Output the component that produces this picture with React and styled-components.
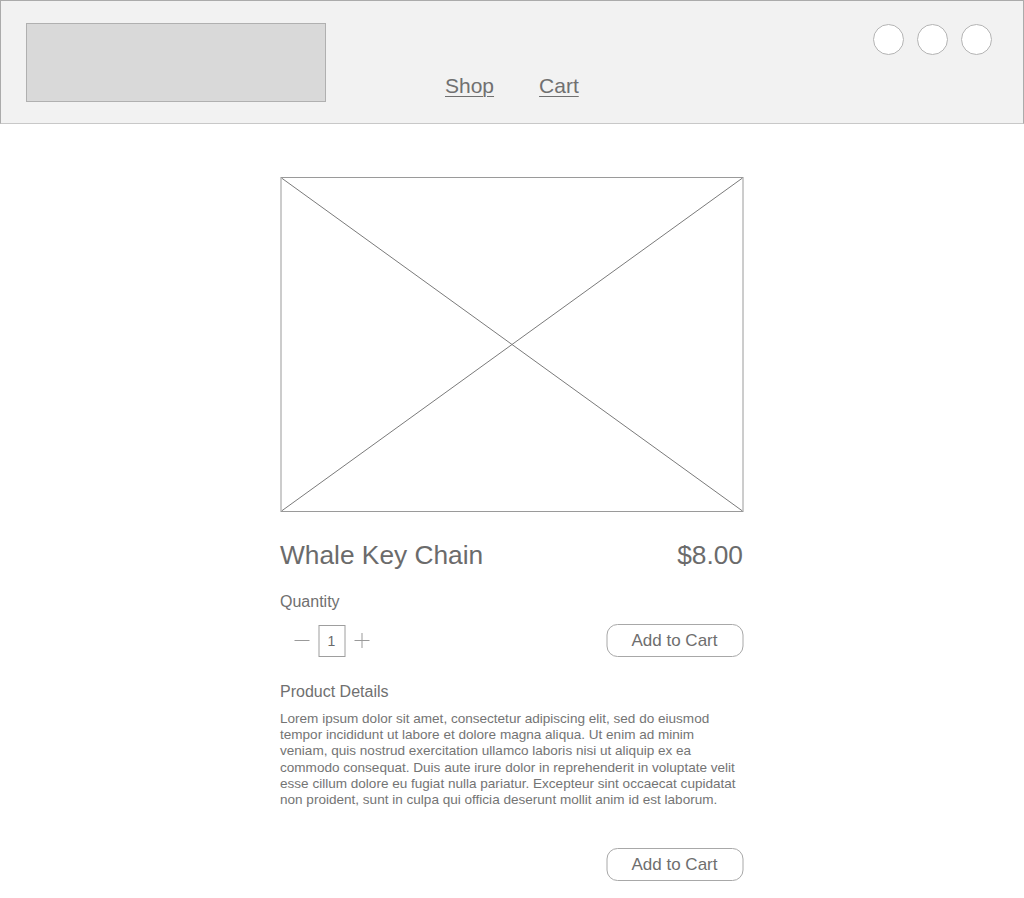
import styled, { createGlobalStyle } from 'styled-components';

const GlobalStyle = createGlobalStyle`
  body {
    margin: 0;
    background: #ffffff;
    font-family: "Liberation Sans", Arial, sans-serif;
    color: #6e6e6e;
  }
`;

const Header = styled.header`
  height: 124px;
  box-sizing: border-box;
  background: #f2f2f2;
  border: 1px solid #ababab;
  border-bottom-color: #c8c8c8;
  display: flex;
  padding: 22px 31px 0 25px;
`;

const Logo = styled.div`
  width: 300px;
  height: 79px;
  box-sizing: border-box;
  background: #d9d9d9;
  border: 1px solid #b0b0b0;
`;

const Nav = styled.nav`
  display: flex;
  gap: 45px;
  margin-left: 119px;
  padding-top: 50px;
`;

const NavLink = styled.a`
  font-size: 21px;
  color: #707070;
  text-decoration: underline;
  text-underline-offset: 3px;
  text-decoration-thickness: 1px;
  line-height: 26px;
  height: 26px;
`;

const Icons = styled.div`
  margin-left: auto;
  display: flex;
  gap: 13px;
  padding-top: 1px;
`;

const Circle = styled.div`
  width: 31px;
  height: 31px;
  box-sizing: border-box;
  border-radius: 50%;
  background: #ffffff;
  border: 1px solid #b4b4b4;
`;

const Main = styled.main`
  width: 463px;
  margin: 0 auto;
  padding: 53px 0 40px;
  transform: translateX(-0.5px);
`;

const ImageBox = styled.div`
  height: 335px;
  border: 1px solid #9a9a9a;
  box-sizing: border-box;
  svg {
    display: block;
    width: 100%;
    height: 100%;
  }
`;

const TitleRow = styled.div`
  display: flex;
  justify-content: space-between;
  align-items: center;
  margin-top: 28px;
  font-size: 26.3px;
  line-height: 30px;
  color: #6b6b6b;
`;

const Label = styled.div`
  font-size: 16px;
  line-height: 20px;
  color: #707070;
  margin-top: ${p => p.$gap || 0}px;
`;

const ActionRow = styled.div`
  display: flex;
  justify-content: space-between;
  align-items: center;
  margin-top: ${p => p.$gap || 0}px;
`;

const Stepper = styled.div`
  display: flex;
  align-items: center;
  gap: 9px;
  padding-left: 14px;
`;

const StepSign = styled.span`
  width: 15px;
  height: 15px;
  position: relative;
  &::before, &::after {
    content: '';
    position: absolute;
    background: #9a9a9a;
  }
  &::before {
    left: 0;
    right: 0;
    top: 7px;
    height: 1px;
  }
  &::after {
    display: ${p => (p.$plus ? 'block' : 'none')};
    top: 0;
    bottom: 0;
    left: 7px;
    width: 1px;
  }
`;

const QtyBox = styled.div`
  width: 27px;
  height: 32px;
  box-sizing: border-box;
  border: 1px solid #9e9e9e;
  display: flex;
  align-items: center;
  justify-content: center;
  font-size: 14px;
  color: #6a6a6a;
`;

const CartButton = styled.button`
  width: 137px;
  height: 33px;
  box-sizing: border-box;
  border: 1px solid #a8a8a8;
  border-radius: 11px;
  background: #ffffff;
  font-family: inherit;
  font-size: 17px;
  color: #6e6e6e;
  padding: 0;
  cursor: pointer;
`;

const Paragraph = styled.p`
  margin: 9px 0 0;
  font-size: 13.55px;
  line-height: 16.2px;
  color: #747474;
`;

const BottomRow = styled.div`
  display: flex;
  justify-content: flex-end;
  margin-top: 40px;
`;

const lorem =
  'Lorem ipsum dolor sit amet, consectetur adipiscing elit, sed do eiusmod tempor incididunt ut labore et dolore magna aliqua. Ut enim ad minim veniam, quis nostrud exercitation ullamco laboris nisi ut aliquip ex ea commodo consequat. Duis aute irure dolor in reprehenderit in voluptate velit esse cillum dolore eu fugiat nulla pariatur. Excepteur sint occaecat cupidatat non proident, sunt in culpa qui officia deserunt mollit anim id est laborum.';

export default function App() {
  return (
    <>
      <GlobalStyle />
      <Header>
        <Logo />
        <Nav>
          <NavLink>Shop</NavLink>
          <NavLink>Cart</NavLink>
        </Nav>
        <Icons>
          <Circle />
          <Circle />
          <Circle />
        </Icons>
      </Header>
      <Main>
        <ImageBox>
          <svg viewBox="0 0 100 100" preserveAspectRatio="none">
            <line x1="0" y1="0" x2="100" y2="100" stroke="#7a7a7a" strokeWidth="1" vectorEffect="non-scaling-stroke" />
            <line x1="100" y1="0" x2="0" y2="100" stroke="#7a7a7a" strokeWidth="1" vectorEffect="non-scaling-stroke" />
          </svg>
        </ImageBox>
        <TitleRow>
          <span>Whale Key Chain</span>
          <span>$8.00</span>
        </TitleRow>
        <Label $gap={22}>Quantity</Label>
        <ActionRow $gap={12}>
          <Stepper>
            <StepSign />
            <QtyBox>1</QtyBox>
            <StepSign $plus />
          </Stepper>
          <CartButton>Add to Cart</CartButton>
        </ActionRow>
        <Label $gap={25}>Product Details</Label>
        <Paragraph>{lorem}</Paragraph>
        <BottomRow>
          <CartButton>Add to Cart</CartButton>
        </BottomRow>
      </Main>
    </>
  );
}
